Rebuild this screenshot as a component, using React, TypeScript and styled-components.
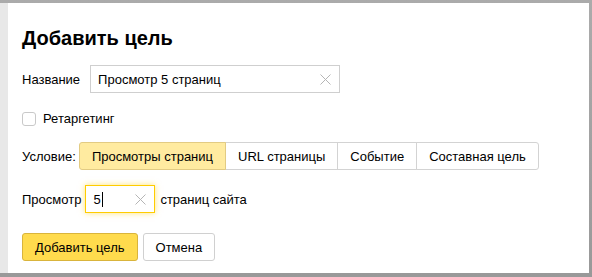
import React, { useState } from 'react';
import styled, { createGlobalStyle } from 'styled-components';

const GlobalStyle = createGlobalStyle`
  html, body {
    margin: 0;
    padding: 0;
    background: #a3a3a3;
  }
  body {
    font-family: "Liberation Sans", Arial, sans-serif;
    font-size: 13px;
    color: #000;
  }
`;

const conditions = ['Просмотры страниц', 'URL страницы', 'Событие', 'Составная цель'];

const ClearIcon = () => (
  <svg width='11' height='11' viewBox='0 0 11 11'>
    <path d='M0.5 0.5 L10.5 10.5 M10.5 0.5 L0.5 10.5' stroke='#b5b5b5' strokeWidth='1' fill='none' />
  </svg>
);

const App = () => {
  const [active, setActive] = useState(0);
  const [retargeting, setRetargeting] = useState(false);

  return (
    <Page>
      <GlobalStyle />
      <BehindStrip />
      <Modal>
        <Title>Добавить цель</Title>
        <Row>
          <Label>Название</Label>
          <TextInput width={250}>
            <InputText>Просмотр 5 страниц</InputText>
            <ClearButton>
              <ClearIcon />
            </ClearButton>
          </TextInput>
        </Row>
        <CheckRow onClick={() => setRetargeting(!retargeting)}>
          <CheckBox checked={retargeting} />
          <span>Ретаргетинг</span>
        </CheckRow>
        <Row>
          <Label>Условие:</Label>
          <Tabs>
            {conditions.map((c, i) => (
              <Tab key={c} active={i === active} onClick={() => setActive(i)}>
                {c}
              </Tab>
            ))}
          </Tabs>
        </Row>
        <ViewsRow>
          <span>Просмотр</span>
          <TextInput width={70} focused>
            <InputText>
              5<Caret />
            </InputText>
            <ClearButton>
              <ClearIcon />
            </ClearButton>
          </TextInput>
          <span>страниц сайта</span>
        </ViewsRow>
        <Buttons>
          <Button primary>Добавить цель</Button>
          <Button>Отмена</Button>
        </Buttons>
      </Modal>
    </Page>
  );
};

const Page = styled.div`
  display: flex;
  height: 277px;
  box-sizing: border-box;
  padding: 3px 3px 4px 0;
  background: linear-gradient(#ababab, #999);
`;
const BehindStrip = styled.div`
  width: 8px;
  background: #e8e8e8;
`;
const Modal = styled.div`
  flex: 1;
  background: #fff;
  padding: 23px 14px 12px 14px;
  box-sizing: border-box;
  display: flex;
  flex-direction: column;
`;
const Title = styled.h1`
  margin: 0 0 15px 0;
  font-size: 20px;
  line-height: 24px;
  font-weight: bold;
  color: #000;
`;
const Row = styled.div`
  display: flex;
  align-items: center;
  gap: 10px;
  height: 28px;
`;
const Label = styled.span`
  white-space: nowrap;
`;
const TextInput = styled.div<{ width: number; focused?: boolean }>`
  width: ${(p) => p.width}px;
  height: 28px;
  box-sizing: border-box;
  display: flex;
  align-items: center;
  justify-content: space-between;
  padding: 0 8px 0 7px;
  border: 1px solid ${(p) => (p.focused ? '#ffcc00' : '#cfcfcf')};
  box-shadow: ${(p) => (p.focused ? '0 0 6px rgba(255, 204, 0, 0.55)' : 'none')};
  background: #fff;
`;
const InputText = styled.span`
  display: flex;
  align-items: center;
  white-space: nowrap;
`;
const Caret = styled.span`
  display: inline-block;
  width: 1px;
  height: 15px;
  background: #000;
  margin-left: 1px;
`;
const ClearButton = styled.span`
  display: flex;
  align-items: center;
  cursor: pointer;
`;
const CheckRow = styled.label`
  display: flex;
  align-items: center;
  gap: 7px;
  height: 16px;
  margin: 18px 0 16px 0;
  cursor: pointer;
`;
const CheckBox = styled.span<{ checked: boolean }>`
  width: 14px;
  height: 14px;
  box-sizing: border-box;
  border: 1px solid #c9c9c9;
  border-radius: 3px;
  background: ${(p) => (p.checked ? '#ffdb4d' : '#fff')};
`;
const Tabs = styled.div`
  display: flex;
  height: 28px;
  margin-left: -7px;
`;
const Tab = styled.div<{ active: boolean }>`
  position: relative;
  z-index: ${(p) => (p.active ? 1 : 0)};
  display: flex;
  align-items: center;
  padding: 0 12px;
  white-space: nowrap;
  cursor: pointer;
  box-sizing: border-box;
  background: ${(p) => (p.active ? '#ffeba0' : '#fff')};
  border: 1px solid ${(p) => (p.active ? '#e2cb83' : '#d3d3d3')};
  & + & {
    margin-left: -1px;
  }
  &:first-child {
    border-radius: 3px 0 0 3px;
  }
  &:last-child {
    border-radius: 0 3px 3px 0;
  }
`;
const ViewsRow = styled.div`
  display: flex;
  align-items: center;
  gap: 4px;
  height: 28px;
  margin-top: 15px;
  & > span:last-child {
    margin-left: 1px;
  }
`;
const Buttons = styled.div`
  display: flex;
  gap: 5px;
  margin-top: 20px;
`;
const Button = styled.button<{ primary?: boolean }>`
  height: 28px;
  padding: 0 12px;
  font-family: inherit;
  font-size: 13px;
  color: #000;
  border-radius: 3px;
  cursor: pointer;
  background: ${(p) => (p.primary ? '#ffdb4d' : '#fff')};
  border: 1px solid ${(p) => (p.primary ? '#d9b43c' : '#d0d0d0')};
`;

export default App;
